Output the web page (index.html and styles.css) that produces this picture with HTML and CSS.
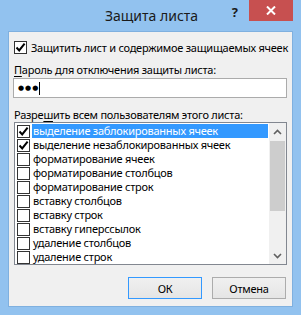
FILE: index.html
```html
<!DOCTYPE html>
<html lang="ru">
<head>
<meta charset="utf-8">
<title>Защита листа</title>
<link rel="stylesheet" href="styles.css">
</head>
<body>
<div class="window">
  <div class="titlebar">
    <span class="title">Защита листа</span>
    <div class="controls">
      <span class="help">?</span>
      <span class="close"><svg width="10" height="9" viewBox="0 0 10 9"><path d="M1 0.5 L9 8.5 M9 0.5 L1 8.5" stroke="#fff" stroke-width="2"/></svg></span>
    </div>
  </div>
  <div class="client">
    <div class="check-row">
      <span class="cb"><svg width="11" height="11" viewBox="0 0 11 11"><path d="M1.5 5.5 L4.2 8.4 L9.6 1.6" fill="none" stroke="#000" stroke-width="2"/></svg></span>
      <span class="cb-text">Защитить лист и содержимое защищаемых ячеек</span>
    </div>
    <div class="label"><u>П</u>ароль для отключения защиты листа:</div>
    <div class="input"><span class="dots">●●●</span><span class="caret"></span></div>
    <div class="label label-list">Разре<u>ш</u>ить всем пользователям этого листа:</div>
    <div class="list">
      <div class="items">
        <div class="row selected"><span class="cb"><svg width="11" height="11" viewBox="0 0 11 11"><path d="M1.5 5.5 L4.2 8.4 L9.6 1.6" fill="none" stroke="#000" stroke-width="2"/></svg></span><span class="row-text">выделение заблокированных ячеек</span></div>
        <div class="row"><span class="cb"><svg width="11" height="11" viewBox="0 0 11 11"><path d="M1.5 5.5 L4.2 8.4 L9.6 1.6" fill="none" stroke="#000" stroke-width="2"/></svg></span><span class="row-text">выделение незаблокированных ячеек</span></div>
        <div class="row"><span class="cb"></span><span class="row-text">форматирование ячеек</span></div>
        <div class="row"><span class="cb"></span><span class="row-text">форматирование столбцов</span></div>
        <div class="row"><span class="cb"></span><span class="row-text">форматирование строк</span></div>
        <div class="row"><span class="cb"></span><span class="row-text">вставку столбцов</span></div>
        <div class="row"><span class="cb"></span><span class="row-text">вставку строк</span></div>
        <div class="row"><span class="cb"></span><span class="row-text">вставку гиперссылок</span></div>
        <div class="row"><span class="cb"></span><span class="row-text">удаление столбцов</span></div>
        <div class="row"><span class="cb"></span><span class="row-text">удаление строк</span></div>
      </div>
      <div class="scrollbar">
        <span class="arrow"><svg width="9" height="6" viewBox="0 0 9 6"><path d="M1 5 L4.5 1.5 L8 5" fill="none" stroke="#606060" stroke-width="1.6"/></svg></span>
        <div class="track"><div class="thumb"></div></div>
        <span class="arrow"><svg width="9" height="6" viewBox="0 0 9 6"><path d="M1 1 L4.5 4.5 L8 1" fill="none" stroke="#606060" stroke-width="1.6"/></svg></span>
      </div>
    </div>
    <div class="buttons">
      <button class="btn btn-default">ОК</button>
      <button class="btn">Отмена</button>
    </div>
  </div>
</div>
</body>
</html>
```

FILE: styles.css
```css
* { box-sizing: border-box; }
html, body { margin: 0; padding: 0; }
body {
  font-family: "Noto Sans", "Open Sans", sans-serif;
  font-size: 11px;
  letter-spacing: -0.25px;
  color: #000;
  background: #92c2ef;
}
.window {
  width: 301px;
  height: 315px;
  background: #92c2ef;
  display: flex;
  flex-direction: column;
}
.titlebar {
  position: relative;
  height: 31px;
  display: flex;
  justify-content: center;
}
.title {
  font-size: 14px;
  letter-spacing: 0;
  line-height: 20px;
  margin-top: 6px;
  margin-left: 2px;
  color: #1a1a1a;
}
.controls {
  position: absolute;
  top: 0;
  right: 8px;
  display: flex;
  align-items: flex-start;
}
.help {
  font-weight: bold;
  font-size: 13px;
  letter-spacing: 0;
  line-height: 14px;
  margin-top: 5px;
  margin-right: 11px;
  color: #1a1a1a;
}
.close {
  width: 44px;
  height: 21px;
  background: #c75050;
  display: flex;
  align-items: center;
  justify-content: center;
}
.client {
  margin: 0 8px 8px;
  flex: 1;
  background: #f0f0f0;
  border: 1px solid #7fb0df;
  padding: 9px 5px 0 5px;
  display: flex;
  flex-direction: column;
}
.check-row {
  display: flex;
  align-items: center;
  height: 13px;
}
.cb {
  width: 13px;
  height: 13px;
  border: 1px solid #333;
  background: #fff;
  display: flex;
  align-items: center;
  justify-content: center;
  flex: none;
}
.cb-text {
  margin-left: 4px;
  line-height: 15px;
  white-space: nowrap;
}
.label {
  line-height: 15px;
  margin-top: 8px;
  white-space: nowrap;
}
.label u { text-decoration: underline; text-underline-offset: 2px; }
.input {
  margin-top: 1px;
  margin-left: -1px;
  height: 20px;
  background: #fff;
  border: 1px solid #ababab;
  display: flex;
  align-items: center;
  padding-left: 4px;
}
.dots {
  font-family: "DejaVu Sans", sans-serif;
  font-size: 7px;
  letter-spacing: 1px;
  line-height: 10px;
}
.caret {
  width: 1px;
  height: 13px;
  background: #000;
  margin-left: 0;
}
.label-list { margin-top: 9px; }
.list {
  height: 143px;
  background: #fff;
  border: 1px solid #828790;
  display: flex;
}
.items {
  flex: 1;
  padding-top: 1px;
  padding-right: 1px;
}
.row {
  height: 14px;
  display: flex;
  align-items: center;
  padding-left: 2px;
}
.row .cb { margin-right: 2px; }
.row-text {
  flex: 1;
  height: 14px;
  line-height: 14px;
  padding-left: 1px;
  white-space: nowrap;
}
.row.selected .row-text {
  background: #3399ff;
  color: #fff;
}
.scrollbar {
  width: 17px;
  background: #f0f0f0;
  display: flex;
  flex-direction: column;
}
.arrow {
  height: 17px;
  display: flex;
  align-items: center;
  justify-content: center;
}
.track {
  flex: 1;
  padding: 1px 1px 0 1px;
}
.thumb {
  height: 70px;
  background: #cdcdcd;
}
.buttons {
  margin-top: 12px;
  display: flex;
  justify-content: flex-end;
  gap: 10px;
  padding-right: 1px;
}
.btn {
  width: 74px;
  height: 22px;
  font-family: inherit;
  font-size: 11px;
  letter-spacing: -0.25px;
  color: #000;
  border: 1px solid #acacac;
  background: linear-gradient(#f0f0f0, #e5e5e5);
  padding: 0;
  border-radius: 0;
}
.btn-default {
  border-color: #3399ff;
}
```
